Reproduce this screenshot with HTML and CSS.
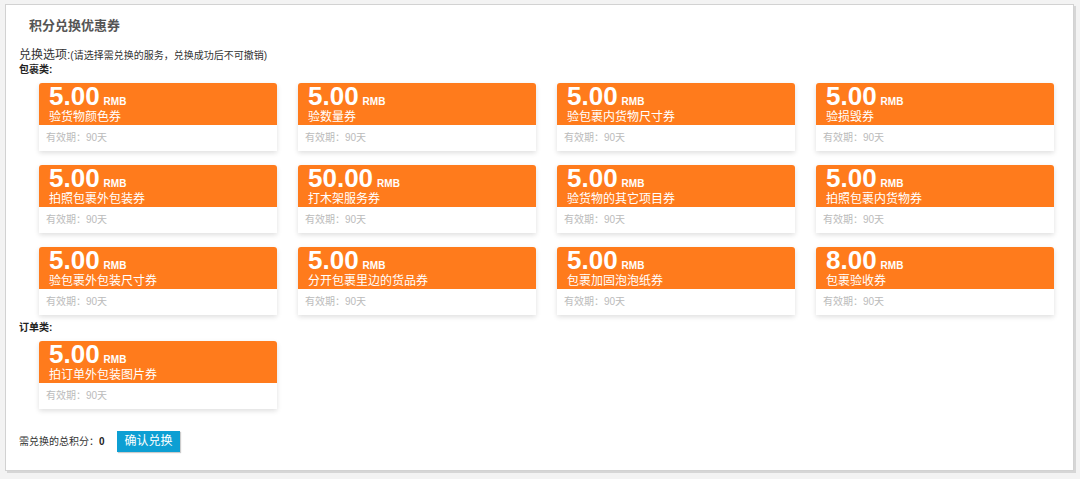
FILE: index.html
```html
<!DOCTYPE html>
<html lang="zh-CN">
<head>
    <meta charset="UTF-8">
    <meta name="viewport" content="width=device-width, initial-scale=1.0">
    <title>积分兑换优惠券</title>
    <link rel="stylesheet" href="styles.css">
</head>
<body>
    <div class="panel">
        <h2 class="panel-title">积分兑换优惠券</h2>
        <div class="panel-body">
            <p class="option-tip">兑换选项:<span>(请选择需兑换的服务，兑换成功后不可撤销)</span></p>

            <p class="cate">包裹类:</p>
            <ul class="coupon-list">
                <li class="coupon">
                    <div class="coupon-top">
                        <p class="price">5.00<span>RMB</span></p>
                        <p class="name">验货物颜色券</p>
                    </div>
                    <p class="date">有效期：90天</p>
                </li>
                <li class="coupon">
                    <div class="coupon-top">
                        <p class="price">5.00<span>RMB</span></p>
                        <p class="name">验数量券</p>
                    </div>
                    <p class="date">有效期：90天</p>
                </li>
                <li class="coupon">
                    <div class="coupon-top">
                        <p class="price">5.00<span>RMB</span></p>
                        <p class="name">验包裹内货物尺寸券</p>
                    </div>
                    <p class="date">有效期：90天</p>
                </li>
                <li class="coupon">
                    <div class="coupon-top">
                        <p class="price">5.00<span>RMB</span></p>
                        <p class="name">验损毁券</p>
                    </div>
                    <p class="date">有效期：90天</p>
                </li>
                <li class="coupon">
                    <div class="coupon-top">
                        <p class="price">5.00<span>RMB</span></p>
                        <p class="name">拍照包裹外包装券</p>
                    </div>
                    <p class="date">有效期：90天</p>
                </li>
                <li class="coupon">
                    <div class="coupon-top">
                        <p class="price">50.00<span>RMB</span></p>
                        <p class="name">打木架服务券</p>
                    </div>
                    <p class="date">有效期：90天</p>
                </li>
                <li class="coupon">
                    <div class="coupon-top">
                        <p class="price">5.00<span>RMB</span></p>
                        <p class="name">验货物的其它项目券</p>
                    </div>
                    <p class="date">有效期：90天</p>
                </li>
                <li class="coupon">
                    <div class="coupon-top">
                        <p class="price">5.00<span>RMB</span></p>
                        <p class="name">拍照包裹内货物券</p>
                    </div>
                    <p class="date">有效期：90天</p>
                </li>
                <li class="coupon">
                    <div class="coupon-top">
                        <p class="price">5.00<span>RMB</span></p>
                        <p class="name">验包裹外包装尺寸券</p>
                    </div>
                    <p class="date">有效期：90天</p>
                </li>
                <li class="coupon">
                    <div class="coupon-top">
                        <p class="price">5.00<span>RMB</span></p>
                        <p class="name">分开包裹里边的货品券</p>
                    </div>
                    <p class="date">有效期：90天</p>
                </li>
                <li class="coupon">
                    <div class="coupon-top">
                        <p class="price">5.00<span>RMB</span></p>
                        <p class="name">包裹加固泡泡纸券</p>
                    </div>
                    <p class="date">有效期：90天</p>
                </li>
                <li class="coupon">
                    <div class="coupon-top">
                        <p class="price">8.00<span>RMB</span></p>
                        <p class="name">包裹验收券</p>
                    </div>
                    <p class="date">有效期：90天</p>
                </li>
            </ul>

            <p class="cate">订单类:</p>
            <ul class="coupon-list">
                <li class="coupon">
                    <div class="coupon-top">
                        <p class="price">5.00<span>RMB</span></p>
                        <p class="name">拍订单外包装图片券</p>
                    </div>
                    <p class="date">有效期：90天</p>
                </li>
            </ul>

            <div class="total">
                <p class="total-text">需兑换的总积分：<b>0</b></p>
                <a href="#" class="btn-confirm">确认兑换</a>
            </div>
        </div>
    </div>
</body>
</html>
```

FILE: styles.css
```css
*{margin:0; padding:0; box-sizing:border-box;}
li{list-style: none;}
a{text-decoration: none;}

body{
    padding: 4px 6px 8px 5px;
    background-color: #f3f3f3;
    font-family: "Liberation Sans", "Noto Sans CJK SC", sans-serif;
    color: #333;
}
.panel{
    height: 467px;
    background-color: #fff;
    border: 1px solid #d2d2d2;
    box-shadow: 2px 2px 0 #d6d6d6;
}
.panel-title{
    margin: 13px 0 0 23px;
    font-size: 13px; line-height: 16px;
    font-weight: bold;
    color: #555;
}
.panel-body{
    padding: 13px 13px 0;
}
.option-tip{
    height: 16px;
    font-size: 12px; line-height: 16px;
    color: #333;
}
.option-tip span{
    font-size: 10px; line-height: 1;
}
.cate{
    height: 14px;
    font-size: 10px; line-height: 14px;
    font-weight: bold;
    color: #222;
}
.coupon-list{
    display: grid;
    grid-template-columns: repeat(4, 238px);
    column-gap: 21px; row-gap: 14px;
    margin: 6px 0 6px 20px;
}
.coupon{
    height: 68px;
    background-color: #fff;
    border-radius: 3px 3px 0 0;
    box-shadow: 0 2px 5px rgba(0,0,0,0.13);
}
.coupon-top{
    height: 42px;
    padding-left: 10px;
    background-color: #ff7b1c;
    border-radius: 3px 3px 0 0;
    color: #fff;
}
.price{
    height: 27px;
    font-size: 26px; line-height: 27px;
    font-weight: bold;
}
.price span{
    margin-left: 4px;
    font-size: 10px; line-height: 1;
}
.name{
    height: 14px;
    font-size: 12px; line-height: 15px;
}
.date{
    height: 26px;
    padding-left: 7px;
    font-size: 10px; line-height: 26px;
    color: #bbb;
}
.total{
    display: flex;
    align-items: center;
    margin-top: 22px;
}
.total-text{
    width: 98px;
    font-size: 10px; line-height: 14px;
    color: #333;
}
.total-text b{
    color: #222;
}
.btn-confirm{
    width: 63px; height: 21px;
    font-size: 12px; line-height: 21px;
    text-align: center;
    color: #fff;
    background-color: #0d9fd3;
    box-shadow: 1px 1px 1px rgba(0,0,0,0.2);
}
```
